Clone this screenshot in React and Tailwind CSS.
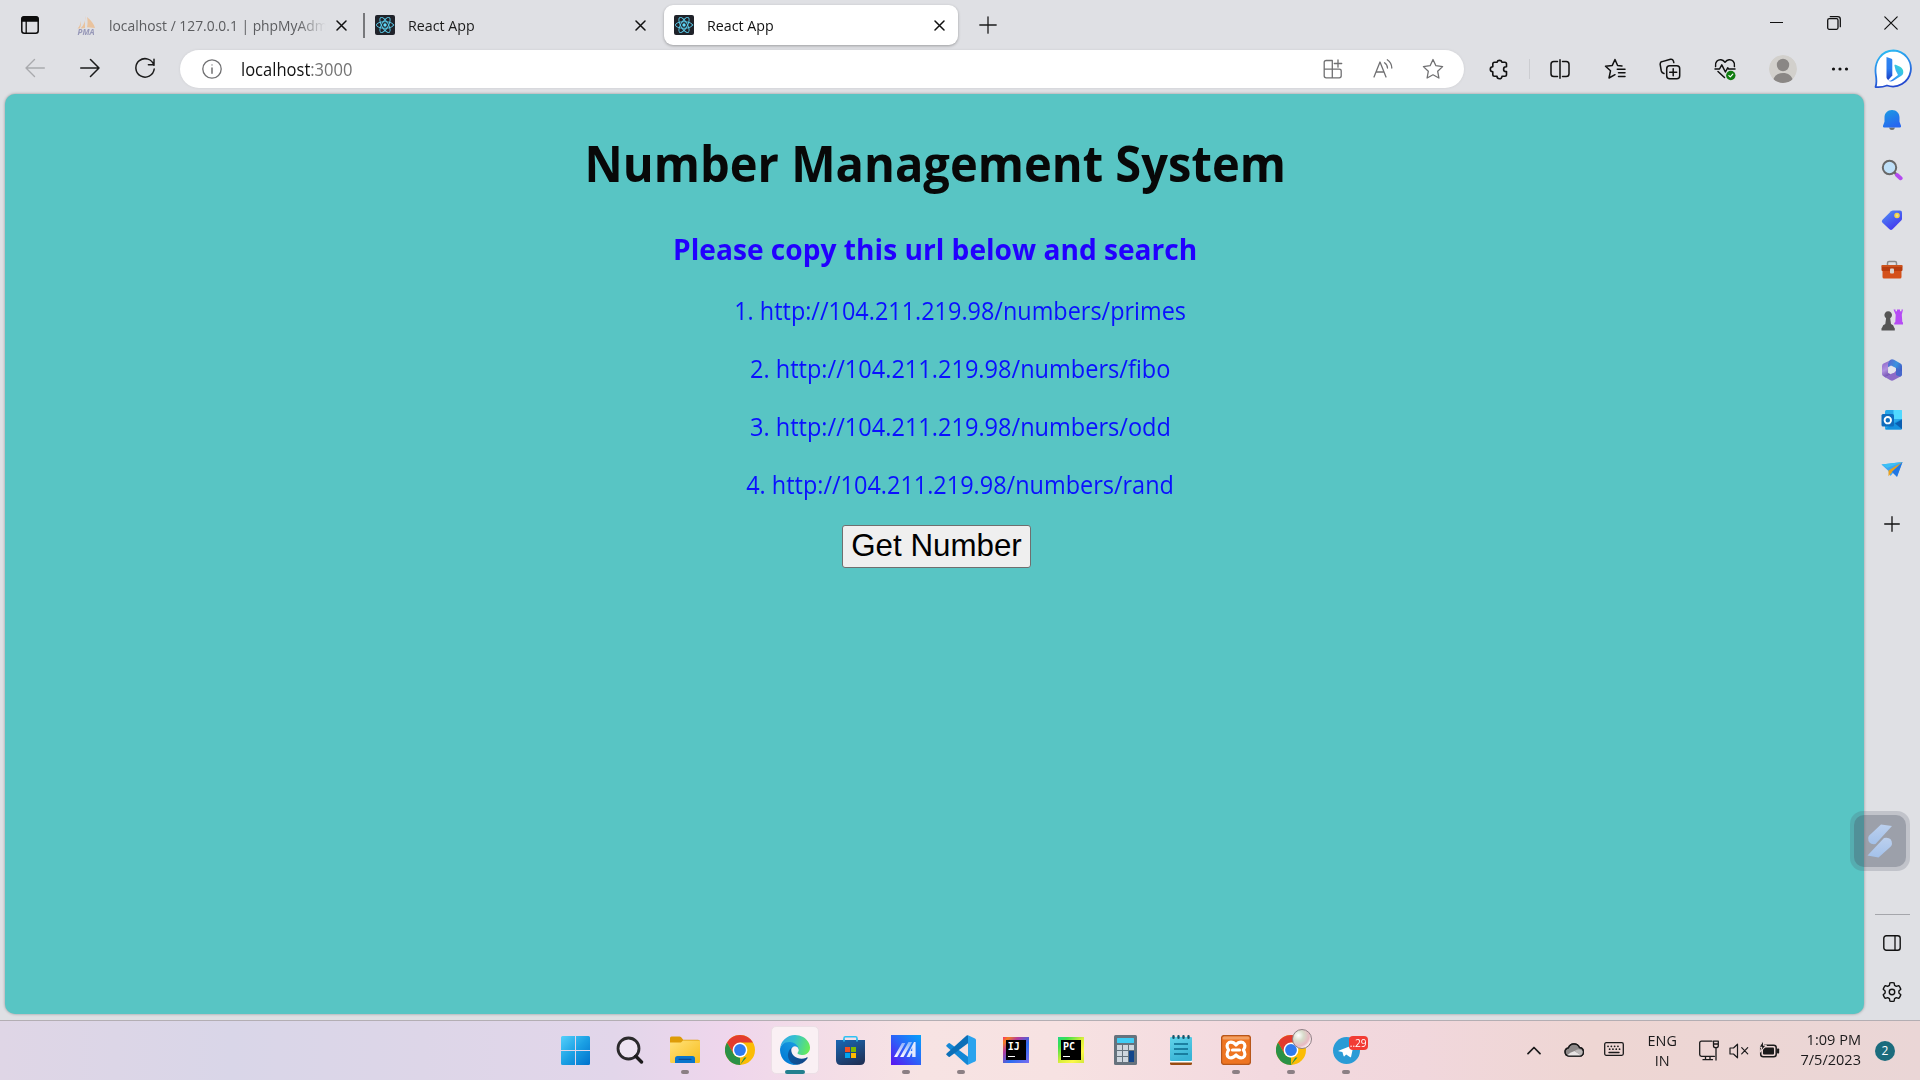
import React from "react";

const Svg = ({ w = 20, h = w, box, className = "", children }) => (
  <svg
    width={w}
    height={h}
    viewBox={box || `0 0 ${w} ${h}`}
    className={`shrink-0 ${className}`}
    fill="none"
    stroke="currentColor"
    strokeWidth="1.3"
    strokeLinecap="round"
    strokeLinejoin="round"
  >
    {children}
  </svg>
);

/* ---------- tab strip ---------- */

const ReactLogo = () => (
  <Svg w={20}>
    <rect width="20" height="20" rx="2" fill="#20232a" stroke="none" />
    <g stroke="#5ccfee" strokeWidth="0.9">
      <ellipse cx="10" cy="10" rx="8.6" ry="3.3" />
      <ellipse cx="10" cy="10" rx="8.6" ry="3.3" transform="rotate(60 10 10)" />
      <ellipse cx="10" cy="10" rx="8.6" ry="3.3" transform="rotate(120 10 10)" />
    </g>
    <circle cx="10" cy="10" r="1.7" fill="#61dafb" stroke="none" />
  </Svg>
);

const PmaLogo = () => (
  <div className="flex w-5 flex-col items-center opacity-60">
    <Svg w={20} h={13}>
      <g fill="#f0b071" stroke="none">
        <path d="M9 0c1 4-1 9-4.500 12.500L9 12z" />
        <path d="M11 1c4 3 7 7 8 11l-8-.8c.8-3 .8-7 0-10.200z" />
        <path d="M4.500 5c0 3-1 5.500-3 7.500h2.300c1.200-2 1.400-5 .7-7.500z" />
      </g>
    </Svg>
    <span className="-mt-px text-[8px] leading-[7px] font-bold italic text-[#66679a]">PMA</span>
  </div>
);

const CloseX = () => (
  <Svg w={11} className="text-[#111]">
    <path d="M1 1l9 9M10 1l-9 9" strokeWidth="1.5" />
  </Svg>
);

function TabStrip() {
  return (
    <div className="flex h-[50px] items-start">
      <div className="flex h-[50px] w-[61px] items-center pl-[21px]">
        <Svg w={18} className="text-[#0c0c0c]">
          <rect x="0.8" y="0.8" width="16.400" height="16.400" rx="2.500" strokeWidth="1.500" />
          <path d="M1 3.200Q1 1 3.200 1h11.600Q17 1 17 3.200V5H1z" fill="currentColor" />
          <path d="M5.200 5v12" />
        </Svg>
      </div>
      <div className="mt-[5px] flex h-10 w-[302px] items-center pl-[15px] pr-[16px]">
        <PmaLogo />
        <div className="mb-px ml-[13px] w-[217px]">
          <div className="w-max origin-left scale-x-[0.924] text-[15px] leading-5 text-[#5b5c5f] [mask-image:linear-gradient(to_right,black_86%,transparent_99%)]">
            localhost / 127.0.0.1 | phpMyAdm
          </div>
        </div>
        <div className="ml-auto mt-px">
          <CloseX />
        </div>
      </div>
      <div className="mt-[13px] h-[25px] w-[1.500px] bg-[#77787b]" />
      <div className="mt-[5px] flex h-10 w-[299.500px] items-center pl-[10.500px] pr-[18px]">
        <ReactLogo />
        <span className="mb-px ml-[13px] origin-left scale-x-[0.950] text-[15px] leading-5 text-[#1b1b1b]">React App</span>
        <div className="ml-auto mt-px">
          <CloseX />
        </div>
      </div>
      <div className="mt-[5px] flex h-10 w-[294px] items-center rounded-[9px] bg-white pl-[10px] pr-[13px] shadow-[0_1px_3px_rgba(0,0,0,0.3)]">
        <ReactLogo />
        <span className="mb-px ml-[13px] origin-left scale-x-[0.950] text-[15px] leading-5 text-[#111]">React App</span>
        <div className="ml-auto mt-px">
          <CloseX />
        </div>
      </div>
      <div className="ml-[21px] mt-4">
        <Svg w={18} className="text-[#1b1b1b]">
          <path d="M9 .8v16.400M.8 9h16.400" strokeWidth="1.300" />
        </Svg>
      </div>
      <div className="ml-auto flex h-[45px] text-[#111]">
        <div className="flex w-[57px] items-center justify-center">
          <div className="h-[1.500px] w-[13px] bg-[#111]" />
        </div>
        <div className="flex w-[57px] items-center justify-center">
          <Svg w={14}>
            <rect x="0.700" y="2.700" width="10.300" height="10.600" rx="1.500" />
            <path d="M3.300.700h7.400q2.600 0 2.600 2.600v7.400" />
          </Svg>
        </div>
        <div className="flex w-[58px] items-center justify-center">
          <Svg w={14}>
            <path d="M.8.8l12.400 12.400M13.200.8L.8 13.200" strokeWidth="1.200" />
          </Svg>
        </div>
      </div>
    </div>
  );
}

/* ---------- toolbar ---------- */

const Slot = ({ className = "w-[55px]", children }) => (
  <div className={`flex shrink-0 items-center justify-center ${className}`}>{children}</div>
);

const BingLogo = () => (
  <Svg w={40} h={40}>
    <defs>
      <linearGradient id="bingRing" x1="0" y1="0" x2="0.300" y2="1">
        <stop offset="0" stopColor="#2cc3f4" />
        <stop offset="0.500" stopColor="#2a8bea" />
        <stop offset="1" stopColor="#2449cf" />
      </linearGradient>
      <linearGradient id="bingStem" x1="0" y1="0" x2="0" y2="1">
        <stop offset="0" stopColor="#2f86f0" />
        <stop offset="0.500" stopColor="#2b7cf0" />
        <stop offset="1" stopColor="#1b40c4" />
      </linearGradient>
      <linearGradient id="bingBowl" x1="1" y1="0" x2="0" y2="1">
        <stop offset="0" stopColor="#35e0c4" />
        <stop offset="0.450" stopColor="#38b5f3" />
        <stop offset="1" stopColor="#2a6ff0" />
      </linearGradient>
    </defs>
    <path
      d="M20.500 1.500a18 18 0 1 1-6.500 35c-3.500 1.400-7.500 2-11.500 1.500 1.500-4 1-8 .3-12.300C.8 12 9 1.500 20.500 1.500z"
      fill="#fff"
      stroke="url(#bingRing)"
      strokeWidth="1.800"
    />
    <path d="M13.500 8l5 1.800c.5.200.8.600.8 1.100v15.600L15.300 31c-1-.6-1.800-1.500-1.800-2.700z" fill="url(#bingStem)" stroke="none" />
    <path
      d="M21.500 16.800c-.3-.9.300-1.400 1.200-1l4.400 2c2 1 3.200 3 3.200 5.100 0 1.800-.8 3.200-2.300 4.200l-7.700 4.600c-1.600 1-3.500 1-5-.2 1.600.5 2.700-.2 4-1.100L25 26l-2.300-4.600z"
      fill="url(#bingBowl)"
      stroke="none"
    />
  </Svg>
);

function Toolbar() {
  return (
    <div className="flex h-[44px] items-start text-[#1b1b1b]">
      <div className="flex h-9 pl-[7.500px]">
        <Slot>
          <Svg w={20} className="text-[#a9aaad]">
            <path d="M19.300 10H1M9.500 1.500L1 10l8.500 8.500" strokeWidth="1.400" />
          </Svg>
        </Slot>
        <Slot>
          <Svg w={20}>
            <path d="M.7 10H19M10.500 1.500L19 10l-8.500 8.500" strokeWidth="1.500" />
          </Svg>
        </Slot>
        <Slot>
          <Svg w={22}>
            <path d="M19.900 8.300A9.200 9.200 0 1 0 20.200 12M20 2.200v5.600h-5.600" strokeWidth="1.500" />
          </Svg>
        </Slot>
      </div>
      <div className="ml-[7.500px] flex h-[38px] w-[1284px] items-center rounded-full bg-white pl-[22px] pr-[6px] text-[#707072] shadow-[0_0_3px_rgba(0,0,0,0.080)]">
        <Svg w={20}>
          <circle cx="10" cy="10" r="9.200" />
          <path d="M10 9v5.300" strokeWidth="1.500" />
          <circle cx="10" cy="5.900" r="0.700" fill="currentColor" stroke="none" />
        </Svg>
        <span className="mb-px ml-[19px] origin-left scale-x-[0.945] text-[17.500px] leading-6 text-[#747474]">
          <span className="text-[#111]">localhost</span>:3000
        </span>
        <div className="ml-auto flex">
          <Slot className="w-[50px]">
            <Svg w={20}>
              <path d="M9.300 1.500H3.200Q1.200 1.500 1.200 3.500v13.300q0 2 2 2h13q2 0 2-2V12q0-1.800-2-1.800h-15M9.300 1.500v17.300M9.300 3.500v-2M15 .8v7.400M11.300 4.500h7.400" />
            </Svg>
          </Slot>
          <Slot className="w-[50px]">
            <Svg w={20}>
              <path d="M1 18L7 3l6 15M3.200 13h7.600M11.500 3.800c2 1.200 2.900 2.900 3 5.200M14.300.8c2.900 2 4.400 4.700 4.500 8.200" />
            </Svg>
          </Slot>
          <Slot className="w-[50px]">
            <Svg w={22}>
              <path d="M11 1.500l2.900 6.200 6.700.9-4.900 4.700 1.200 6.700L11 16.800 5.100 20l1.200-6.700L1.400 8.600l6.700-.9z" />
            </Svg>
          </Slot>
        </div>
      </div>
      <div className="ml-[7.500px] flex h-[38px] text-[#111]">
        <Slot>
          <Svg w={20} className="overflow-visible">
            <path
              d="M8 3.300a2.600 2.600 0 0 1 5 0h2.800q1.700 0 1.700 1.700v2.800h-.5a2.400 2.400 0 0 0 0 4.800h.5v3q0 1.700-1.700 1.700H13a2.500 2.500 0 0 1-5 0H5.500q-1.700 0-1.700-1.700v-2.900a2.500 2.500 0 0 1 0-5V5q0-1.700 1.700-1.700z"
              strokeWidth="1.600"
            />
          </Svg>
        </Slot>
        <Slot className="w-[6px]">
          <div className="h-5 w-[1.500px] bg-[#cccdd1]" />
        </Slot>
        <Slot>
          <Svg w={20}>
            <path d="M7.500 2.500H3.800Q1 2.500 1 5.300v9.400q0 2.800 2.800 2.800h3.700M12.500 2.500h3.700Q19 2.500 19 5.300v9.400q0 2.800-2.800 2.800h-3.700M10 .8v18.400" strokeWidth="1.500" />
          </Svg>
        </Slot>
        <Slot>
          <Svg w={22}>
            <path d="M18 7.900l-4.400-.4L11 1.500 8.300 7.400 1.500 8.200l5 4.600L5 20l6-3.300M13.300 11.200H21M14.500 14.800H21M14.500 18.400H21" strokeWidth="1.500" />
          </Svg>
        </Slot>
        <Slot>
          <Svg w={22}>
            <rect x="7.700" y="7.700" width="13" height="13" rx="3" strokeWidth="1.500" />
            <path d="M14.200 10.700v7M10.700 14.200h7M5 15.500C3.200 15 2.700 14.500 2.300 13L1.200 6.700Q.8 4.200 3.200 3.600l8.300-2.300q2.200-.4 2.900 1.600l.4 1.700" strokeWidth="1.500" />
          </Svg>
        </Slot>
        <Slot>
          <Svg w={22} className="overflow-visible">
            <path d="M1.600 8.500C.6 4 4 1.400 7 1.800c1.700.2 3 1.200 4 2.400 1-1.200 2.300-2.200 4-2.400 3-.4 6.400 2.200 5.400 6.700M1 11h4.500l2.300-4.200 3.600 7.200 2.300-4.200.9 1.200H21M4 13.500l6.500 6" strokeWidth="1.500" />
            <circle cx="16.800" cy="17.500" r="4.700" fill="#107c10" stroke="none" />
            <path d="M14.900 17.600l1.400 1.300 2.500-2.700" stroke="#fff" strokeWidth="1.200" />
          </Svg>
        </Slot>
        <Slot className="w-[60px]">
          <Svg w={28}>
            <defs>
              <clipPath id="avatarClip">
                <circle cx="14" cy="14" r="14" />
              </clipPath>
            </defs>
            <g clipPath="url(#avatarClip)" stroke="none">
              <circle cx="14" cy="14" r="14" fill="#d2d0cc" />
              <circle cx="14" cy="10" r="6.200" fill="#8a8785" />
              <path d="M4 26c1-5.500 5-8 10-8s9 2.500 10 8c-2.500 1.300-5.500 2-10 2s-7.500-.7-10-2z" fill="#8a8785" />
            </g>
          </Svg>
        </Slot>
        <Slot>
          <Svg w={18} h={4}>
            <g fill="#111" stroke="none">
              <circle cx="2.500" cy="2" r="1.600" />
              <circle cx="9" cy="2" r="1.600" />
              <circle cx="15.500" cy="2" r="1.600" />
            </g>
          </Svg>
        </Slot>
        <Slot className="w-[51px]">
          <BingLogo />
        </Slot>
      </div>
    </div>
  );
}

/* ---------- page ---------- */

const urls = [
  { name: "primes", fit: "scale-x-[0.937]" },
  { name: "fibo", fit: "scale-x-[0.942]" },
  { name: "odd", fit: "scale-x-[0.942]" },
  { name: "rand", fit: "scale-x-[0.938]" },
];

function Page() {
  return (
    <main className="ml-[5px] flex h-[920px] w-[1859px] flex-col items-center rounded-[10px] bg-[#58c5c4] pt-[35px] shadow-[0_0_3px_rgba(0,0,0,0.350)]">
      <h1 className="ml-[2px] h-[68px] scale-x-[0.932] text-[50.500px] leading-[68px] font-bold whitespace-nowrap text-[#080808]">
        Number Management System
      </h1>
      <h2 className="ml-[2px] mt-8 h-10 scale-x-[0.970] text-[29px] leading-10 font-bold whitespace-nowrap text-[#2200ff]">
        Please copy this url below and search
      </h2>
      <ol className="mt-3 flex flex-col items-center pl-[52px]">
        {urls.map((u, i) => (
          <li key={u.name} className={`h-[58px] text-[25px] leading-[58px] whitespace-nowrap text-[#0a10ff] ${u.fit}`}>
            {i + 1}. http://104.211.219.98/numbers/{u.name}
          </li>
        ))}
      </ol>
      <button className="ml-[4px] mt-3 h-[43px] w-[189px] rounded-[3px] border border-[#6f6f6f] bg-[#efefef] pb-[2px] font-['Liberation_Sans',sans-serif] text-[31.300px] leading-[38px] whitespace-nowrap text-black">
        Get Number
      </button>
    </main>
  );
}

/* ---------- sidebar ---------- */

const sideIcons = [
  <Svg w={22} key="bell">
    <defs>
      <linearGradient id="bell" x1="0" y1="0" x2="0.500" y2="1">
        <stop offset="0" stopColor="#1b9de2" />
        <stop offset="1" stopColor="#2867f0" />
      </linearGradient>
    </defs>
    <path d="M8 18.500h6q-.5 2.500-3 2.500t-3-2.500z" fill="#6d6d6d" stroke="none" />
    <path d="M11 1C6.500 1 3.500 4.300 3.500 8.500v4.300l-1.500 4q-.5 1.700 1 1.700h16q1.500 0 1-1.700l-1.500-4V8.500C18.500 4.300 15.500 1 11 1z" fill="url(#bell)" stroke="none" />
  </Svg>,
  <Svg w={22} key="search">
    <path d="M14 14l1.500 1.500" stroke="#6d6d6d" strokeWidth="2.500" />
    <path d="M16 16l3.600 3.200" stroke="#b44af0" strokeWidth="4" />
    <circle cx="8.500" cy="8.500" r="6.700" fill="#bfe0f8" stroke="#686868" strokeWidth="2" />
  </Svg>,
  <Svg w={22} key="tag">
    <defs>
      <linearGradient id="tag" x1="0" y1="0" x2="0.700" y2="1">
        <stop offset="0" stopColor="#4f95f5" />
        <stop offset="1" stopColor="#4332ee" />
      </linearGradient>
    </defs>
    <path d="M12 1.500h7q2 0 2 2v6.300q0 1-.8 1.800l-8.700 8.700q-1.500 1.400-3 0l-7-6.600q-1.500-1.500 0-3L10 2.300q.9-.8 2-.8z" fill="url(#tag)" stroke="none" />
    <circle cx="16" cy="6.500" r="2" fill="#e9dca0" stroke="#f5d442" strokeWidth="1.500" />
  </Svg>,
  <Svg w={22} key="toolbox">
    <path d="M6.500 6.500V4q0-1.500 1.500-1.500h6q1.500 0 1.500 1.500v2.500" stroke="#8a8a8a" strokeWidth="1.500" />
    <rect x="1.500" y="10" width="19" height="9.500" rx="1.500" fill="#d4501a" stroke="none" />
    <rect x="0.500" y="6" width="21" height="6" rx="1" fill="#b83c0e" stroke="none" />
    <path d="M1 7h20" stroke="#e06a2c" strokeWidth="1" />
    <rect x="9" y="9.500" width="4" height="5" rx="1" fill="#d8d4d0" stroke="none" />
  </Svg>,
  <Svg w={22} h={24} key="games">
    <path d="M12.500 1.500h2v1.800h1.500V1.500h3v1.800h1.500V1.500H22l-1.200 5.300.5 7.200q1.500 1 1 2.500h-9q-.5-1.500 1-2.500l.4-7.200z" fill="#b64cf5" stroke="none" />
    <path d="M3.500 8a3.800 3.800 0 1 1 7.400 0q-.5 1.400-1.700 2.200L10 16q2.800 1 3 3.200 1.200.8.800 3.300H.5q-.5-2.500.8-3.300.2-2.200 3-3.200l.8-5.800Q4 9.400 3.500 8z" fill="#555" stroke="none" />
  </Svg>,
  <Svg w={22} key="m365">
    <defs>
      <linearGradient id="m1" x1="0" y1="0" x2="1" y2="0.500">
        <stop offset="0" stopColor="#5d62cc" />
        <stop offset="0.600" stopColor="#3a93e0" />
        <stop offset="1" stopColor="#3f5fc8" />
      </linearGradient>
      <linearGradient id="m2" x1="0" y1="0" x2="0.300" y2="1">
        <stop offset="0" stopColor="#8a62c6" />
        <stop offset="0.600" stopColor="#b191e0" />
        <stop offset="1" stopColor="#7656b4" />
      </linearGradient>
    </defs>
    <path d="M11 .3q1 0 2 .5l6.500 3.700Q21 5.400 21 7v8q0 1.200-1 2l-5-3.200V9L10 6.500 7 8.300V4.500q0-1.500 1-2.400 1.500-1.800 3-1.800z" fill="url(#m1)" stroke="none" />
    <path d="M8.500 1.700Q7 3 7 5v8.700l3 1.800-5.500 2.900-2.300-1.300Q1 16.300 1 15V7.200q0-1.700 1.500-2.600z" fill="url(#m2)" stroke="none" />
    <path d="M2.500 17.200Q5 18 7 16.800l8-4.800v2l5.300 2.700-.8.700-6.500 3.700q-2 1.200-4 0z" fill="#8c6bc8" stroke="none" />
    <path d="M15 8.500l6 4V15q0 1.400-1 2.200-2 .8-5-1.200z" fill="#4768cc" stroke="none" />
    <circle cx="11" cy="11" r="3.300" fill="#e4e5ee" stroke="none" />
  </Svg>,
  <Svg w={22} key="outlook">
    <rect x="4" y="1" width="17" height="19.500" rx="1.500" fill="#28a8ea" stroke="none" />
    <path d="M12.500 1H20q1 0 1 1v8h-8.500z" fill="#50d9ff" stroke="none" />
    <path d="M4 20l8.500-6L21 10v9.500q0 1-1 1H5z" fill="#1490df" stroke="none" />
    <path d="M21 10.500v9.500l-7-5.500z" fill="#0a5eb0" stroke="none" />
    <rect x="0.500" y="5" width="12.500" height="12.500" rx="1.500" fill="#0f6cbd" stroke="none" />
    <circle cx="6.800" cy="11.200" r="3.200" stroke="#fff" strokeWidth="1.900" />
  </Svg>,
  <Svg w={22} key="drop">
    <path d="M.5 5.500L21.500 3 16 17.500 12 14l-2.500 3-2-5z" fill="#3fa4f2" stroke="none" />
    <path d="M21.500 3L7.500 11.500v5.700l3-3.500z" fill="#e8a01c" stroke="none" />
    <path d="M21.500 3L11 12.800 16 18z" fill="#2077e4" stroke="none" />
    <path d="M.5 5.500L21.500 3 6 9z" fill="#3cc0f5" stroke="none" />
  </Svg>,
];

function Sidebar() {
  return (
    <aside className="relative flex h-full w-[56px] flex-col items-center text-[#111]">
      <div className="flex flex-col items-center pt-px">
        {sideIcons.map((icon, i) => (
          <div key={i} className="flex h-[50px] items-center justify-center">
            {icon}
          </div>
        ))}
      </div>
      <div className="mt-[21px]">
        <Svg w={16}>
          <path d="M8 .7v14.600M.7 8h14.600" strokeWidth="1.300" />
        </Svg>
      </div>
      <div className="mt-auto h-px w-[35px] bg-[#a5a6ab]" />
      <div className="mt-[20px]">
        <Svg w={18} h={16}>
          <rect x="0.800" y="0.800" width="16.400" height="14.400" rx="2.500" strokeWidth="1.400" />
          <path d="M12 1v14" />
        </Svg>
      </div>
      <div className="mb-[17px] mt-[30px]">
        <Svg w={22} box="0 0 24 24">
          <path
            d="M12 1.800c.8 0 1.600.1 2.300.3l.5 2.700 1.900 1.100 2.600-.9c1.100 1.200 1.900 2.500 2.300 4l-2.100 1.900v2.200l2.100 1.900c-.4 1.500-1.200 2.800-2.300 4l-2.600-.9-1.900 1.100-.5 2.700c-1.500.4-3.100.4-4.600 0l-.5-2.700-1.900-1.100-2.600.9c-1.100-1.200-1.900-2.500-2.300-4l2.100-1.900v-2.200L2.400 9c.4-1.500 1.200-2.800 2.300-4l2.600.9 1.900-1.100.5-2.700c.7-.2 1.500-.3 2.300-.3z"
            strokeWidth="1.500"
          />
          <circle cx="12" cy="12" r="3" strokeWidth="1.500" />
        </Svg>
      </div>
      <div className="absolute left-[-14px] top-[717px] flex size-[60px] items-center justify-center rounded-[13px] bg-[#4a4e63]/20">
        <div className="flex size-[52px] items-center justify-center rounded-[10px] bg-[#4a4e60]/30">
          <Svg w={26} h={34}>
            <defs>
              <linearGradient id="glide" x1="0" y1="0" x2="0" y2="1">
                <stop offset="0" stopColor="#bcd0ee" />
                <stop offset="1" stopColor="#a3c1ea" />
              </linearGradient>
            </defs>
            <path d="M14 .5L25 2 8.500 20Q1 21 1.200 14q.1-1.500 1.300-2.700z" fill="url(#glide)" stroke="none" />
            <path d="M11.500 33.500L.5 31.500 17 14q8-1.500 8 6-.2 1.500-1.500 2.700z" fill="url(#glide)" stroke="none" />
          </Svg>
        </div>
      </div>
    </aside>
  );
}

/* ---------- taskbar ---------- */

const ChromeLogo = () => (
  <Svg w={30}>
    <g stroke="none">
      <circle cx="15" cy="15" r="15" fill="#fbbc05" />
      <path d="M15 0A15 15 0 0 1 28 7.500H15L8.500 18.700 2 7.500A15 15 0 0 1 15 0z" fill="#e33b2e" />
      <path d="M2 7.500l6.500 11.200A7.500 7.500 0 0 0 15 22.500h6.500L15 30A15 15 0 0 1 2 7.500z" fill="#2b9146" />
      <path d="M15 30l6.500-11.300L15 22z" fill="#fbbc05" />
      <circle cx="15" cy="15" r="7.400" fill="#fff" />
      <circle cx="15" cy="15" r="5.900" fill="#2f7bee" />
    </g>
  </Svg>
);

const WindowsLogo = () => (
  <Svg w={29}>
    <defs>
      <linearGradient id="win" gradientUnits="userSpaceOnUse" x1="0" y1="0" x2="29" y2="29">
        <stop offset="0" stopColor="#54d0fb" />
        <stop offset="0.500" stopColor="#1ba0e4" />
        <stop offset="1" stopColor="#0071cc" />
      </linearGradient>
    </defs>
    <path d="M1.500 0H14v14H0V1.500Q0 0 1.500 0zM15 0h12.500Q29 0 29 1.500V14H15zM0 15h14v14H1.500Q0 29 0 27.500zM15 15h14v12.500q0 1.500-1.500 1.500H15z" fill="url(#win)" stroke="none" />
  </Svg>
);

const SearchGlyph = () => (
  <Svg w={28}>
    <circle cx="12.500" cy="12.500" r="10.500" fill="#fff" fillOpacity="0.350" stroke="#2b2a2c" strokeWidth="2.800" />
    <path d="M19.800 20.300l5.700 5.700" stroke="#1c1b1c" strokeWidth="3.400" />
  </Svg>
);

const FolderLogo = () => (
  <Svg w={30} h={28}>
    <defs>
      <linearGradient id="folder" x1="0" y1="0" x2="1" y2="1">
        <stop offset="0" stopColor="#ffe27a" />
        <stop offset="1" stopColor="#f8bd1c" />
      </linearGradient>
    </defs>
    <g stroke="none">
      <path d="M0 2Q0 .500 1.500.500h8q1 0 1.700.8l2 2.500H28q2 0 2 1.500V10H0z" fill="#dd9c08" />
      <path d="M0 6.500h11l2-2h16q1 0 1 1v20q0 1.500-1.500 1.500h-27Q0 27 0 25.500z" fill="url(#folder)" />
      <path d="M5 27v-4.500Q5 20 7.500 20h15q2.500 0 2.500 2.500V27z" fill="#0a75cc" />
      <rect x="8.500" y="22.700" width="13" height="1.300" rx="0.600" fill="#0b4b93" />
    </g>
  </Svg>
);

const EdgeLogo = () => (
  <Svg w={30} box="0 0 256 256">
    <defs>
      <linearGradient id="edgeDark" x1="0.300" y1="0" x2="1" y2="0.500">
        <stop offset="0" stopColor="#0c59a4" />
        <stop offset="1" stopColor="#114a8b" />
      </linearGradient>
      <linearGradient id="edgeBlue" x1="0.900" y1="0" x2="0.200" y2="1">
        <stop offset="0" stopColor="#1b9de2" />
        <stop offset="1" stopColor="#0078d4" />
      </linearGradient>
      <linearGradient id="edgeGreen" x1="0" y1="0.300" x2="1" y2="0.500">
        <stop offset="0" stopColor="#35a8e6" />
        <stop offset="0.450" stopColor="#35c1cf" />
        <stop offset="1" stopColor="#66eb5a" />
      </linearGradient>
    </defs>
    <g stroke="none">
      <path fill="url(#edgeDark)" d="M231 190.500c-3.400 1.800-6.900 3.400-10.500 4.700a101.700 101.700 0 0 1-35.900 6.400c-47.300 0-88.500-32.500-88.500-74.300 0-11.400 6.500-22.300 16.300-27.700C69.600 101.400 58.800 146 58.800 172c0 73.900 68 81.300 82.700 81.300 7.900 0 19.800-2.300 27-4.600l1.300-.4a128.300 128.300 0 0 0 66.600-52.800 4 4 0 0 0-5.400-5z" />
      <path fill="url(#edgeBlue)" d="M105.700 241.400a79.200 79.200 0 0 1-22.700-21.300 80.700 80.700 0 0 1 29.500-120c3.100-1.500 8.500-4.100 15.600-4a32.400 32.400 0 0 1 25.700 13 31.900 31.900 0 0 1 6.300 18.700c0-.2 24.500-79.600-80-79.600-43.900 0-80 41.700-80 78.200a130.200 130.200 0 0 0 12.100 56 128 128 0 0 0 156.400 67 75.500 75.500 0 0 1-62.800-8z" />
      <path fill="url(#edgeGreen)" d="M152.300 148.900c-.8 1-3.300 2.500-3.300 5.700 0 2.600 1.700 5.100 4.700 7.200 14.400 10 41.500 8.700 41.600 8.700a59.600 59.600 0 0 0 30.300-8.300 61.400 61.400 0 0 0 30.400-52.900c.3-22.400-8-37.300-11.300-43.900C223.500 23.900 177.700 0 128 0A128 128 0 0 0 0 126.200c.5-36.500 36.800-66 80-66 3.500 0 23.500.3 42 10 16.300 8.600 24.900 18.900 30.800 29.200 6.200 10.700 7.300 24.100 7.300 29.500 0 5.300-2.700 13.300-7.800 20z" />
    </g>
  </Svg>
);

const StoreLogo = () => (
  <Svg w={29}>
    <defs>
      <linearGradient id="store" x1="0.200" y1="0" x2="0.700" y2="1">
        <stop offset="0" stopColor="#1a64ae" />
        <stop offset="1" stopColor="#1f3158" />
      </linearGradient>
    </defs>
    <path d="M8 5V2.200Q8 .8 9.400.8h10.200q1.400 0 1.400 1.400V5" stroke="#2fc0f2" strokeWidth="1.600" />
    <path d="M0 4h29v20q0 5-5 5H5q-5 0-5-5z" fill="url(#store)" stroke="none" />
    <path d="M8 5V3.500M21 5V3.500" stroke="#2fc0f2" strokeWidth="1.600" />
    <g stroke="none">
      <path d="M9 11h5v5H9z" fill="#f25022" />
      <path d="M15 11h5v5h-5z" fill="#7fba00" />
      <path d="M9 17h5v5H9z" fill="#00a4ef" />
      <path d="M15 17h5v5h-5z" fill="#ffb900" />
    </g>
  </Svg>
);

const ArmouryLogo = () => (
  <Svg w={30}>
    <defs>
      <linearGradient id="arm" x1="0" y1="1" x2="1" y2="0">
        <stop offset="0" stopColor="#5b12f0" />
        <stop offset="0.500" stopColor="#2c62f8" />
        <stop offset="1" stopColor="#06a2fb" />
      </linearGradient>
      <linearGradient id="armBar" x1="0" y1="1" x2="0" y2="0">
        <stop offset="0" stopColor="#fff" />
        <stop offset="1" stopColor="#fff" stopOpacity="0.450" />
      </linearGradient>
    </defs>
    <g stroke="none">
      <rect width="30" height="30" fill="url(#arm)" />
      <path d="M3 22L11 8h3.300L6.300 22zM9 22L17.500 7h3.600L12.500 22z" fill="url(#armBar)" />
      <path d="M15.500 22L23 7h1.600v15h-3.400v-3.500h-.9L18.700 22zM21.200 16v-3.500L19.600 16z" fill="#e3eafe" />
    </g>
  </Svg>
);

const VsCodeLogo = () => (
  <Svg w={30}>
    <g stroke="none">
      <path d="M22 21.800L3.800 8.300q-.8-.5-1.500.1L.6 10q-.8.8 0 1.600l20 17.800q.8.500 1.400.3z" fill="#1387d6" />
      <path d="M22 8.200L3.800 21.700q-.8.500-1.500-.1L.6 20q-.8-.8 0-1.600L20.600.6Q21.400.100 22 .300z" fill="#0b6fb8" />
      <path d="M22 .3L29 3.500q1 .5 1 1.600v19.800q0 1.100-1 1.600l-7 3.200z" fill="#2aa3ee" />
    </g>
  </Svg>
);

const IdeLogo = ({ label, colors }) => (
  <div className="flex size-[26px] items-center justify-center" style={{ background: colors }}>
    <div className="flex size-[20px] flex-col items-start justify-between bg-black px-[2px] pt-px pb-[3px]">
      <span className="font-['DejaVu_Sans_Mono','Liberation_Mono',monospace] text-[10px] leading-[11px] font-bold text-white">{label}</span>
      <span className="h-[1.500px] w-[7px] bg-white" />
    </div>
  </div>
);

const CalcLogo = () => (
  <Svg w={23} h={30}>
    <g stroke="none">
      <rect width="23" height="30" rx="1.500" fill="#66727d" />
      <rect x="3" y="3" width="17" height="5" rx="0.500" fill="#3fcdf5" />
      <path d="M3 10h5v5H3zM9 10h5v5H9zM15 10h5v5h-5zM3 16h5v5H3zM9 16h5v5H9zM3 22h5v5H3zM9 22h5v5H9z" fill="#cfd6de" />
      <path d="M15 16h5v11h-5z" fill="#13468c" />
    </g>
  </Svg>
);

const NotepadLogo = () => (
  <Svg w={22} h={30}>
    <defs>
      <linearGradient id="note" x1="0" y1="0" x2="0.400" y2="1">
        <stop offset="0" stopColor="#62d4ea" />
        <stop offset="1" stopColor="#39b4d6" />
      </linearGradient>
    </defs>
    <path d="M0 27h22v1.500q0 1.500-1.500 1.500h-19Q0 30 0 28.500z" fill="#994c12" stroke="none" />
    <rect y="25" width="22" height="2.500" fill="#fff" stroke="none" />
    <rect y="2" width="22" height="24" rx="1" fill="url(#note)" stroke="none" />
    <path d="M4 9h14M4 14h14M4 19h14" stroke="#0b6a8c" strokeWidth="1.600" strokeLinecap="butt" />
    <path d="M3.500 1.300v1.500M8.500 1.300v1.500M13.500 1.300v1.500M18.500 1.300v1.500" stroke="#15566b" strokeWidth="2.400" />
  </Svg>
);

const XamppLogo = () => (
  <Svg w={30}>
    <rect x="0.500" y="0.500" width="29" height="29" rx="3" fill="#ee7421" stroke="#b7571b" />
    <rect x="1.500" y="1.500" width="27" height="3" rx="1.500" fill="#f2a063" stroke="none" />
    <path
      d="M8 7.500c3.500-1 5 0 7 2.500 2-2.500 3.500-3.500 7-2.500 2.500 1.500 2.500 5 .3 7.500 2.200 2.500 2.200 6-.3 7.500-3.500 1-5 0-7-2.500-2 2.500-3.500 3.500-7 2.500-2.500-1.500-2.500-5-.3-7.500C5.500 12.500 5.500 9 8 7.500z"
      fill="none"
      stroke="#fff"
      strokeWidth="3.200"
    />
    <path d="M11.500 15h7" stroke="#fff" strokeWidth="3.200" />
  </Svg>
);

const ChromeProfile = () => (
  <div className="relative">
    <ChromeLogo />
    <div className="absolute left-4 -top-[6px] size-5 rounded-full border border-[#8f7f85] bg-[radial-gradient(circle_at_30%_30%,#ffffff_0%,#d8dccb_30%,#e6b9c2_60%,#fbeef0_75%,#9c8488_100%)]" />
  </div>
);

const TelegramLogo = () => (
  <div className="relative">
    <Svg w={27}>
      <g stroke="none">
        <circle cx="13.500" cy="13.500" r="13.500" fill="#2a9bd6" />
        <path d="M5.500 13.800L19.500 8.200q1-.3.900.8l-2.300 10.700q-.3 1-1.200.4l-3.700-2.700-1.800 1.800q-.6.500-.8-.3l-1.200-3.800-3.700-.8q-.8-.2-.2-.500z" fill="#fff" />
      </g>
    </Svg>
    <div className="absolute left-[16px] top-[-1px] flex h-[14px] w-[19px] items-center justify-center rounded-[4px] bg-[#f23c34] text-[11px] leading-none text-white">
      <span className="scale-x-[0.920]">..29</span>
    </div>
  </div>
);

const apps = [
  { icon: <WindowsLogo /> },
  { icon: <SearchGlyph /> },
  { icon: <FolderLogo />, open: true },
  { icon: <ChromeLogo /> },
  { icon: <EdgeLogo />, active: true },
  { icon: <StoreLogo /> },
  { icon: <ArmouryLogo />, open: true },
  { icon: <VsCodeLogo />, open: true },
  { icon: <IdeLogo label="IJ" colors="linear-gradient(135deg,#fc2d6b 0%,#f2801f 12%,#b63a9a 30%,#2b6df0 60%,#7a6bf0 100%)" /> },
  { icon: <IdeLogo label="PC" colors="linear-gradient(135deg,#21d789 0%,#3fe04a 20%,#d8ee3a 50%,#fcf84a 75%,#d3e83a 100%)" /> },
  { icon: <CalcLogo /> },
  { icon: <NotepadLogo /> },
  { icon: <XamppLogo />, open: true },
  { icon: <ChromeProfile />, open: true },
  { icon: <TelegramLogo />, open: true },
];

function Taskbar() {
  return (
    <footer className="flex h-[60px] items-stretch border-t border-[#b3aeb3] bg-[linear-gradient(90deg,#dfd6e6_0%,#d9d6e8_12%,#ddd6e8_22%,#e2d6ea_32%,#efd6ec_38%,#f3dce8_42%,#f7e3e3_48%,#f7e2e2_55%,#f3d9df_66%,#f1d7dc_74%,#eed6d3_83%,#ead6d6_100%)] text-[#1b1a1b]">
      <div className="flex pl-[547.500px] pt-[5px]">
        {apps.map((app, i) => (
          <div key={i} className="flex w-[55.100px] justify-center">
            <div
              className={
                app.active
                  ? "relative flex size-12 items-center justify-center rounded-[5px] border border-[#ecdfe6] bg-[#faf0f4]"
                  : "relative flex size-12 items-center justify-center"
              }
            >
              {app.icon}
              {app.active && <div className="absolute bottom-[-1px] h-1 w-5 rounded-full bg-[#23808f]" />}
              {app.open && <div className="absolute bottom-0 h-1 w-2 rounded-full bg-[#8b7f84]" />}
            </div>
          </div>
        ))}
      </div>
      <div className="ml-auto flex items-center pr-[25px]">
        <Slot className="w-10">
          <Svg w={14} h={9}>
            <path d="M1 7.700l6-6.200 6 6.200" strokeWidth="1.700" />
          </Svg>
        </Slot>
        <Slot className="w-10 pb-[2px]">
          <Svg w={20} h={14}>
            <path d="M5 13.200a4.200 4.200 0 0 1-.6-8.300A6 6 0 0 1 15.500 4.500a4.400 4.400 0 0 1 .3 8.700z" fill="#8d8888" />
            <path d="M3 12.500Q6 9 10.500 8l7 4.500-1.500.7H5z" fill="#e8e4e4" stroke="none" />
            <path d="M10.500 8Q15 4.500 19 8v3l-2 1.600z" fill="#bcb8b8" stroke="none" />
            <path d="M5 13.200a4.200 4.200 0 0 1-.6-8.300A6 6 0 0 1 15.500 4.500a4.400 4.400 0 0 1 .3 8.700z" />
          </Svg>
        </Slot>
        <Slot className="w-10 pb-[3px]">
          <Svg w={20} h={14}>
            <rect x="0.700" y="0.700" width="18.600" height="12.600" rx="1.500" />
            <path d="M4 4.300h.1M7.300 4.300h.1M10.600 4.300h.1M13.900 4.300h.1M5.600 7.200h.1M8.900 7.200h.1M12.200 7.200h.1M15.500 7.200h.1" strokeWidth="1.700" />
            <path d="M5 10.500h10" strokeWidth="1.400" />
          </Svg>
        </Slot>
        <Slot className="w-[56px] pb-[2px]">
          <div className="scale-x-[0.960] text-center text-[15px] leading-[20px]">
            ENG
            <br />
            IN
          </div>
        </Slot>
        <Slot className="ml-1 w-[30px] pb-px">
          <Svg w={20} h={21}>
            <path d="M13 1.200H2.500Q.7 1.200.7 3v11.500q0 1.800 1.800 1.800h13M6.500 16.500v3M11 16.500v3M4 19.700h9.500M17 8.500v11.500M14.500 1.200h4.800v4.500q0 2-2.400 2t-2.400-2zM14.500 4h4.500" strokeWidth="1.300" />
          </Svg>
        </Slot>
        <Slot className="w-[30px]">
          <Svg w={20} h={16}>
            <path d="M8.500 1.200v13.600L4.500 11H1V5h3.500zM12.700 4.700l6 6.200M18.700 4.700l-6 6.200" strokeWidth="1.200" />
          </Svg>
        </Slot>
        <Slot className="w-[30px] pb-[3px]">
          <Svg w={21} h={17} className="overflow-visible">
            <rect x="1.700" y="4.200" width="15.500" height="11.500" rx="2.500" strokeWidth="1.500" />
            <rect x="4" y="6.500" width="11" height="7" rx="1" fill="#1b1a1b" stroke="none" />
            <path d="M18.700 8.200h.8v3.600h-.8z" fill="#1b1a1b" />
            <path d="M4.500-1L0 6.300h2.700L1.300 11 7.300 4.300H4.500z" fill="#1b1a1b" stroke="#ead7d6" strokeWidth="1.100" />
          </Svg>
        </Slot>
        <div className="w-[77px] origin-right scale-x-[0.970] pb-[3px] text-right text-[15px] leading-[20px] whitespace-nowrap">
          1:09 PM
          <br />
          7/5/2023
        </div>
        <div className="ml-[14px] flex size-5 items-center justify-center rounded-full bg-[#1b6c7d] text-[12px] leading-none text-white">
          2
        </div>
      </div>
    </footer>
  );
}

export default function App() {
  return (
    <div className="flex h-[1080px] w-[1920px] flex-col overflow-hidden bg-[#dfe0e4] font-['Open_Sans','Noto_Sans',sans-serif]">
      <TabStrip />
      <Toolbar />
      <div className="flex h-[926px]">
        <Page />
        <Sidebar />
      </div>
      <Taskbar />
    </div>
  );
}
